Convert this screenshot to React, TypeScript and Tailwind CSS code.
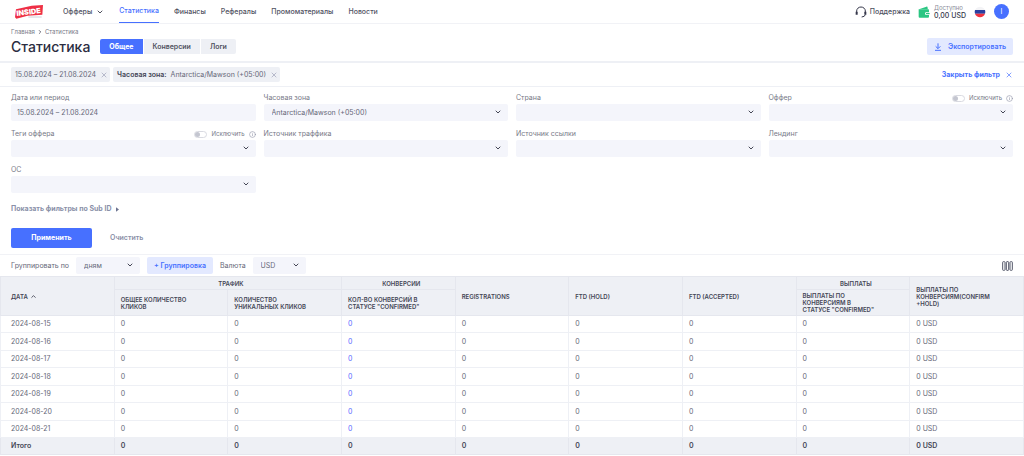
import { useState } from "react";
import type { ReactNode } from "react";
import { ChevronDown, ChevronRight, ChevronUp, Info, X } from "lucide-react";

const navLinks = ["Финансы", "Рефералы", "Промоматериалы", "Новости"];

const tabs = ["Общее", "Конверсии", "Логи"];

const filters = [
  { id: "timezone", label: "Часовая зона", value: "Antarctica/Mawson (+05:00)" },
  { id: "country", label: "Страна" },
  { id: "offer", label: "Оффер", exclude: true },
  { id: "tags", label: "Теги оффера", exclude: true },
  { id: "traffic", label: "Источник траффика" },
  { id: "referrer", label: "Источник ссылки" },
  { id: "landing", label: "Лендинг" },
  { id: "os", label: "ОС" },
];

const dates = [
  "2024-08-15",
  "2024-08-16",
  "2024-08-17",
  "2024-08-18",
  "2024-08-19",
  "2024-08-20",
  "2024-08-21",
];

const values = ["0", "0", "0", "0", "0", "0", "0", "0 USD"];

function Logo() {
  return (
    <svg viewBox="0 0 84 42" className="w-[28px] h-[14px]" role="img" aria-label="Inside">
      <path d="M3 13 L50 2 L84 0 L82 29 L38 32 L4 41 L0 37 Z" fill="#ee2f45" />
      <path d="M40 36 H80" stroke="#b9bac4" strokeWidth="2" />
      <text
        x="5"
        y="33"
        transform="rotate(-7 5 33)"
        fontFamily="Inter, sans-serif"
        fontSize="22"
        fontWeight="900"
        fill="#fff"
      >
        INSIDE
      </text>
    </svg>
  );
}

function HeadsetIcon() {
  return (
    <svg viewBox="0 0 36 36" className="w-3 h-3" fill="none" stroke="#35374a" strokeWidth="3">
      <path d="M5 20 V15 A13 12 0 0 1 31 15 V20" />
      <path d="M5 17 V26 M31 17 V26" strokeWidth="6" />
      <path d="M31 26 Q30 32 20 33" />
    </svg>
  );
}

function WalletIcon() {
  return (
    <svg viewBox="0 0 36 36" className="w-3 h-3" fill="#2ac682">
      <path d="M3 10 L25 2 Q29 1 29 6 V10 Z" />
      <path d="M2 10 H31 Q33 10 33 14 V18 H25 Q21 18 21 22.500 Q21 27 25 27 H33 V32 Q33 35 30 35 H5 Q2 35 2 32 Z" />
      <rect x="24" y="20" width="11" height="5" rx="2" />
    </svg>
  );
}

function FlagIcon() {
  return (
    <svg viewBox="0 0 36 36" className="w-3 h-3" role="img" aria-label="Русский">
      <circle cx="18" cy="18" r="16" fill="#f3f3f6" />
      <path d="M3 12 H33 Q35 18 33 23 H3 Q1 18 3 12 Z" fill="#2a3fa0" />
      <path d="M3 23 H33 A16 16 0 0 1 3 23 Z" fill="#f0323f" />
    </svg>
  );
}

function DownloadIcon() {
  return (
    <svg viewBox="0 0 24 24" className="w-2 h-2" fill="none" stroke="currentColor" strokeWidth="3">
      <path d="M12 1 V16 M5 10 L12 17 L19 10 M3 22 H21" />
    </svg>
  );
}

function ColumnsIcon() {
  return (
    <svg viewBox="0 0 33 30" className="w-[11px] h-[10px]" fill="none" stroke="#55586a" strokeWidth="3">
      <rect x="2" y="2" width="7" height="26" rx="2" />
      <rect x="13" y="2" width="7" height="26" rx="2" />
      <rect x="24" y="2" width="7" height="26" rx="2" />
    </svg>
  );
}

function SelectBox({ id, value }: { id: string; value?: string }) {
  return (
    <div className="relative">
      <select
        id={id}
        className="block w-full h-[17px] pl-2 pr-5 appearance-none rounded-xs bg-[#f4f5fb] text-[#666878]"
      >
        <option>{value ?? ""}</option>
      </select>
      <ChevronDown className="absolute right-[6px] top-1 w-2 h-2 text-[#444655] pointer-events-none" strokeWidth={3} />
    </div>
  );
}

function Field({ id, label, exclude, children }: { id: string; label: string; exclude?: boolean; children: ReactNode }) {
  return (
    <div>
      <div className="flex items-center justify-between h-3 text-[#777987]">
        <label htmlFor={id}>{label}</label>
        {exclude && (
          <label className="flex items-center gap-1 text-[6px]">
            <input
              type="checkbox"
              className="appearance-none w-[13px] h-[7px] rounded-full border border-[#d9dae1] before:block before:w-[5px] before:h-[5px] before:rounded-full before:bg-[#c4c6d0] checked:before:ml-auto"
            />
            Исключить
            <Info className="w-[7px] h-[7px] text-[#8d90a5]" />
          </label>
        )}
      </div>
      {children}
    </div>
  );
}

function Tag({ children }: { children: ReactNode }) {
  return (
    <div className="flex items-center gap-1 h-[15px] pl-1 pr-[2px] rounded-xs bg-[#eef0f5] text-[#666878]">
      <span>{children}</span>
      <button type="button" aria-label="Удалить">
        <X className="w-2 h-2 text-[#9a9db5]" />
      </button>
    </div>
  );
}

export default function App() {
  const [activeTab, setActiveTab] = useState("Общее");

  return (
    <div className="min-h-screen bg-white font-['Inter','Noto_Sans',sans-serif] text-[7px] leading-[8px] text-[#666878]">
      <header className="flex items-center justify-between h-6 px-[15px] border-b border-[#f1f2f6]">
        <div className="flex items-center gap-5 h-full">
          <Logo />
          <nav className="flex items-stretch gap-[15px] h-full font-medium text-[#50525f]">
            <button type="button" className="flex items-center gap-1">
              Офферы
              <ChevronDown className="w-2 h-2" strokeWidth={3} />
            </button>
            <a href="#" className="flex items-center border-b border-[#4770ff] text-[#4770ff]">
              Статистика
            </a>
            {navLinks.map((link) => (
              <a key={link} href="#" className="flex items-center">
                {link}
              </a>
            ))}
          </nav>
        </div>
        <div className="flex items-center gap-2 text-[#50525f]">
          <a href="#" className="flex items-center gap-[3px] font-medium">
            <HeadsetIcon />
            Поддержка
          </a>
          <div className="flex items-center gap-1">
            <WalletIcon />
            <div>
              <div className="text-[6px] text-[#8a8c99]">Доступно</div>
              <div className="font-medium text-[#35374a]">0,00 USD</div>
            </div>
          </div>
          <FlagIcon />
          <button type="button" className="w-[15px] h-[15px] rounded-full bg-[#4770ff] text-white">
            I
          </button>
        </div>
      </header>

      <section className="px-[11px] pt-1 pb-[6px] border-b-2 border-[#eef0f5]">
        <div className="flex items-center gap-[2px] text-[6px] text-[#777987]">
          <a href="#">Главная</a>
          <ChevronRight className="w-[6px] h-[6px] text-[#444655]" strokeWidth={3} />
          <span>Статистика</span>
        </div>
        <div className="flex items-center justify-between pt-[2px]">
          <div className="flex items-center gap-[10px]">
            <h1 className="text-[14px] leading-[17px] font-medium text-[#2b2d3f]">Статистика</h1>
            <div className="flex gap-px rounded-xs overflow-hidden">
              {tabs.map((tab) => (
                <button
                  key={tab}
                  type="button"
                  onClick={() => setActiveTab(tab)}
                  className={
                    activeTab === tab
                      ? "h-[15px] px-[9px] font-bold bg-[#4770ff] text-white"
                      : "h-[15px] px-[9px] font-semibold bg-[#eef0f5] text-[#50525f]"
                  }
                >
                  {tab}
                </button>
              ))}
            </div>
          </div>
          <button
            type="button"
            className="flex items-center gap-[6px] h-[17px] px-[7px] rounded-xs bg-[#e3e9ff] font-semibold text-[#4770ff]"
          >
            <DownloadIcon />
            Экспортировать
          </button>
        </div>
      </section>

      <section className="flex items-center justify-between h-6 px-[11px] border-b border-[#eef0f5]">
        <div className="flex gap-[3px]">
          <Tag>15.08.2024 – 21.08.2024</Tag>
          <Tag>
            <b className="pr-1 font-semibold text-[#444655]">Часовая зона:</b>
            Antarctica/Mawson (+05:00)
          </Tag>
        </div>
        <button type="button" className="flex items-center gap-[5px] font-bold text-[#4770ff]">
          Закрыть фильтр
          <X className="w-2 h-2" />
        </button>
      </section>

      <form className="px-[11px] pt-[5px] pb-[6px] border-b border-[#f1f2f6]" onSubmit={(e) => e.preventDefault()}>
        <div className="grid grid-cols-4 gap-x-2 gap-y-[7px]">
          <Field id="period" label="Дата или период">
            <input
              id="period"
              type="text"
              defaultValue="15.08.2024 – 21.08.2024"
              className="block w-full h-[17px] px-[6px] rounded-xs bg-[#f4f5fb]"
            />
          </Field>
          {filters.map((filter) => (
            <Field key={filter.id} id={filter.id} label={filter.label} exclude={filter.exclude}>
              <SelectBox id={filter.id} value={filter.value} />
            </Field>
          ))}
        </div>
        <button type="button" className="flex items-center gap-[5px] mt-3 font-bold text-[#8a90a8]">
          Показать фильтры по Sub ID
          <svg viewBox="0 0 4 6" className="w-[3px] h-[5px]" fill="#6c7390">
            <path d="M0 0 L4 3 L0 6 Z" />
          </svg>
        </button>
        <div className="flex items-center gap-[18px] mt-[15px]">
          <button type="submit" className="w-[81px] h-5 rounded-xs bg-[#4770ff] font-bold text-white">
            Применить
          </button>
          <button type="reset" className="font-semibold text-[#8a90a8]">
            Очистить
          </button>
        </div>
      </form>

      <section className="flex items-center justify-between h-[21px] px-[11px]">
        <div className="flex items-center gap-[7px]">
          <label htmlFor="group">Группировать по</label>
          <div className="w-16">
            <SelectBox id="group" value="дням" />
          </div>
          <button type="button" className="h-[17px] px-[7px] rounded-xs bg-[#e3e9ff] font-semibold text-[#4770ff]">
            + Группировка
          </button>
          <label htmlFor="currency">Валюта</label>
          <div className="w-[53px]">
            <SelectBox id="currency" value="USD" />
          </div>
        </div>
        <button type="button" aria-label="Колонки">
          <ColumnsIcon />
        </button>
      </section>

      <table className="w-full table-fixed border-collapse">
        <thead className="bg-[#eef0f5] text-left text-[6px] leading-[7px] text-[#444655] [&_th]:border [&_th]:border-[#e5e7ee] [&_th]:font-semibold [&_th]:p-0 [&_th]:pl-[6px]">
          <tr className="h-[13px]">
            <th rowSpan={2}>
              <button type="button" className="flex items-center gap-[2px] pl-1">
                ДАТА
                <ChevronUp className="w-[7px] h-[7px]" strokeWidth={3} />
              </button>
            </th>
            <th colSpan={2} className="text-center">
              ТРАФИК
            </th>
            <th className="text-center">КОНВЕРСИИ</th>
            <th rowSpan={2}>REGISTRATIONS</th>
            <th rowSpan={2}>FTD (HOLD)</th>
            <th rowSpan={2}>FTD (ACCEPTED)</th>
            <th className="text-center">ВЫПЛАТЫ</th>
            <th rowSpan={2}>
              ВЫПЛАТЫ ПО
              <br />
              КОНВЕРСИЯМ(CONFIRM
              <br />
              +HOLD)
            </th>
          </tr>
          <tr className="h-[26px]">
            <th>
              ОБЩЕЕ КОЛИЧЕСТВО
              <br />
              КЛИКОВ
            </th>
            <th>
              КОЛИЧЕСТВО
              <br />
              УНИКАЛЬНЫХ КЛИКОВ
            </th>
            <th>
              КОЛ-ВО КОНВЕРСИЙ В
              <br />
              СТАТУСЕ "CONFIRMED"
            </th>
            <th>
              ВЫПЛАТЫ ПО
              <br />
              КОНВЕРСИЯМ В
              <br />
              СТАТУСЕ "CONFIRMED"
            </th>
          </tr>
        </thead>
        <tbody className="[&_td]:border [&_td]:border-[#eef0f5] [&_td]:p-0 [&_td]:pl-[6px]">
          {dates.map((date) => (
            <tr key={date} className="h-[17px] even:h-[18px]">
              <td>
                <span className="pl-1">{date}</span>
              </td>
              {values.map((value, i) => (
                <td key={i}>
                  {i === 2 ? (
                    <a href="#" className="text-[#5b6cff]">
                      {value}
                    </a>
                  ) : (
                    value
                  )}
                </td>
              ))}
            </tr>
          ))}
        </tbody>
        <tfoot className="bg-[#eef0f5] font-semibold text-[#444655] [&_td]:border [&_td]:border-[#e5e7ee] [&_td]:p-0 [&_td]:pl-[6px]">
          <tr className="h-[17px]">
            <td>
              <span className="pl-1">Итого</span>
            </td>
            {values.map((value, i) => (
              <td key={i}>{value}</td>
            ))}
          </tr>
        </tfoot>
      </table>
    </div>
  );
}
